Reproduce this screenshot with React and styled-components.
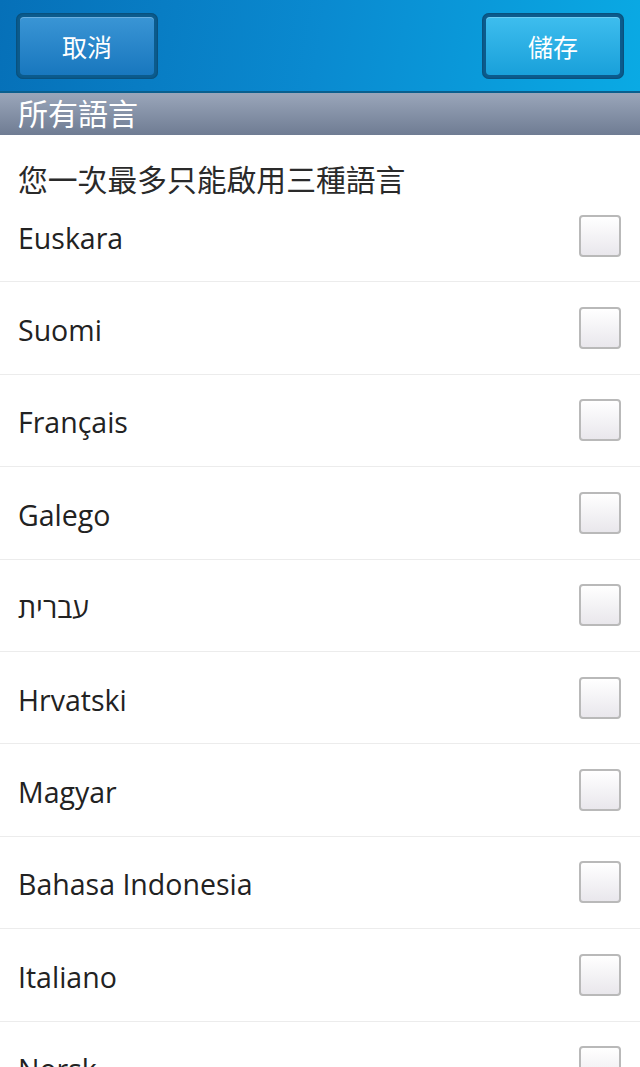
import React from 'react';
import styled, { createGlobalStyle } from 'styled-components';

const languages = [
  'Euskara',
  'Suomi',
  'Français',
  'Galego',
  'עברית',
  'Hrvatski',
  'Magyar',
  'Bahasa Indonesia',
  'Italiano',
  'Norsk',
];

const GlobalStyle = createGlobalStyle`
  html, body {
    margin: 0;
    padding: 0;
    background: #fff;
    overflow: hidden;
  }
  * { box-sizing: border-box; }
`;

const App = () => {
  return (
    <Page>
      <GlobalStyle />
      <TitleBar>
        <BarButton>
          <ButtonFace>取消</ButtonFace>
        </BarButton>
        <BarButton>
          <ButtonFace primary>儲存</ButtonFace>
        </BarButton>
      </TitleBar>
      <SectionHeader>所有語言</SectionHeader>
      <Note>您一次最多只能啟用三種語言</Note>
      <List>
        {languages.map((lang) => (
          <Row key={lang}>
            <Label>{lang}</Label>
            <Checkbox />
          </Row>
        ))}
      </List>
    </Page>
  );
};
export default App;

const Page = styled.div`
  width: 640px;
  height: 1067px;
  overflow: hidden;
  background: #fff;
  font-family: "Open Sans", "Noto Sans CJK TC", sans-serif;
`;

const TitleBar = styled.div`
  height: 93px;
  padding: 13px 16px 0;
  display: flex;
  justify-content: space-between;
  align-items: flex-start;
  background: linear-gradient(100deg, #0670b8 0%, #0a8ad0 50%, #0aaae4 100%);
  border-bottom: 2px solid #0a5f8e;
`;

const BarButton = styled.div`
  width: 142px;
  height: 66px;
  padding: 4px;
  border-radius: 7px;
  background: #0b5b8d;
  box-shadow: inset 0 0 2px rgba(0, 0, 0, 0.4);
`;

const ButtonFace = styled.div`
  height: 100%;
  border-radius: 4px;
  display: flex;
  align-items: center;
  justify-content: center;
  color: #fff;
  font-family: "Noto Sans CJK TC", sans-serif;
  font-size: 25px;
  background: ${(p) =>
    p.primary
      ? 'linear-gradient(180deg, #3ebdee 0%, #19a0da 100%)'
      : 'linear-gradient(180deg, #3a95d5 0%, #1877be 100%)'};
  box-shadow: inset 0 1px 0 rgba(255, 255, 255, 0.25);
`;

const SectionHeader = styled.div`
  height: 42px;
  padding: 0 0 4px 18px;
  display: flex;
  align-items: center;
  color: #fff;
  font-family: "Noto Sans CJK TC", sans-serif;
  font-size: 30px;
  background: linear-gradient(180deg, #9aa6ba 0%, #6f7c93 100%);
`;

const Note = styled.div`
  height: 55px;
  padding: 28px 0 0 18px;
  line-height: 30px;
  color: #2a2a2a;
  font-family: "Noto Sans CJK TC", sans-serif;
  font-size: 29.8px;
  white-space: nowrap;
`;

const List = styled.div`
  display: flex;
  flex-direction: column;
`;

const Row = styled.div`
  height: 92.4px;
  flex-shrink: 0;
  padding: 0 19px 0 18px;
  display: flex;
  align-items: center;
  justify-content: space-between;
  border-bottom: 1px solid #ececec;
`;

const Label = styled.span`
  color: #222;
  font-size: 28.5px;
  direction: ltr;
  unicode-bidi: plaintext;
  padding-top: 4px;
`;

const Checkbox = styled.div`
  width: 42px;
  height: 42px;
  border: 2px solid #b9b9b9;
  border-radius: 4px;
  background: linear-gradient(180deg, #ffffff 0%, #e9e7ec 100%);
`;
